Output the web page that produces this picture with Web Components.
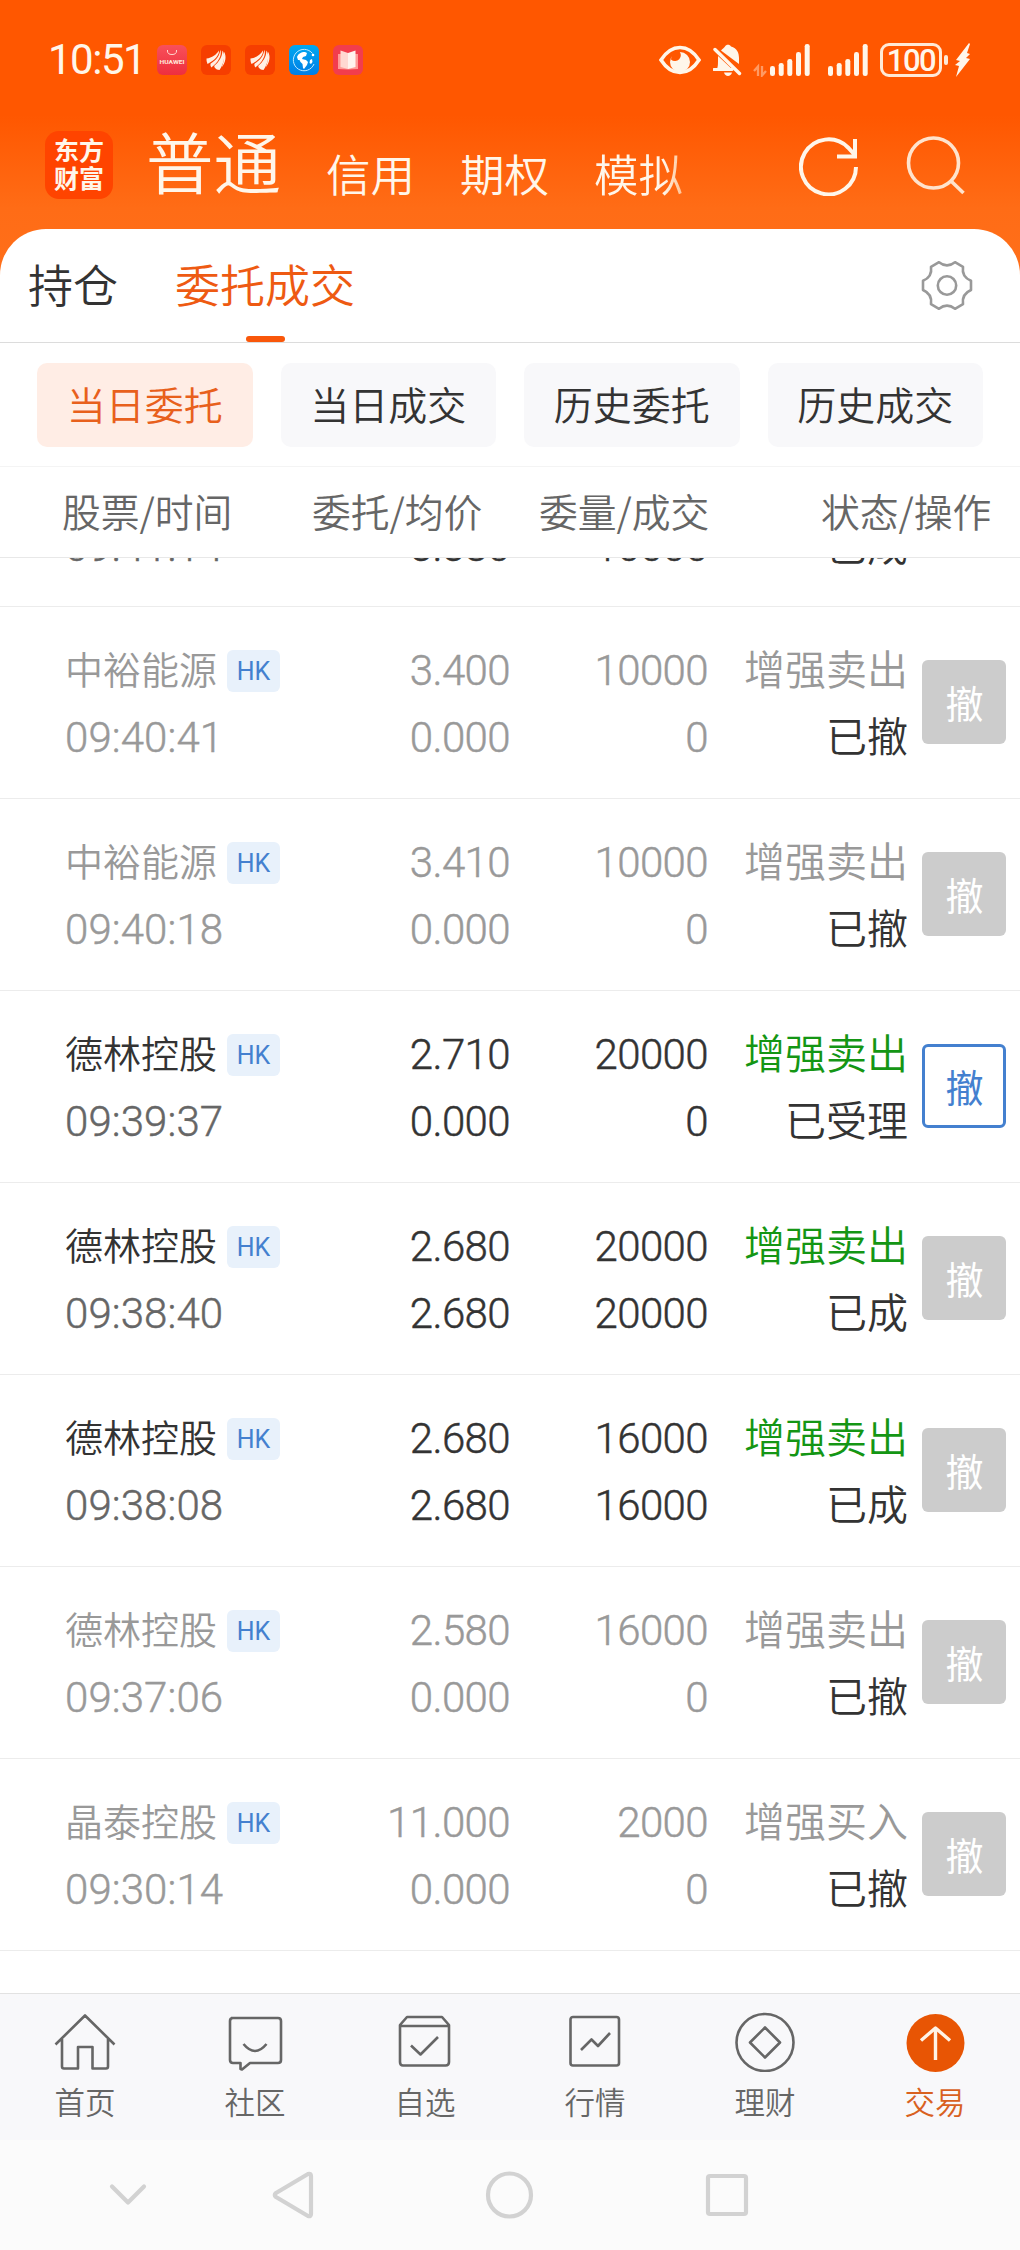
<!DOCTYPE html>
<html lang="zh-CN">
<head>
<meta charset="utf-8">
<title>委托成交</title>
<style>
html,body{margin:0;padding:0;width:1020px;height:2250px;overflow:hidden;background:#fff}
body{font-family:"Noto Sans CJK SC",sans-serif;color:#333}
</style>
</head>
<body>
<trade-app></trade-app>
<script>
const define=(name,css,html)=>customElements.define(name,class extends HTMLElement{
  constructor(){
    super();
    const root=this.attachShadow({mode:'open'});
    root.innerHTML='<style>*{box-sizing:border-box}'+css+'</style>'+(typeof html==='function'?html(this):html);
  }
});
const eagle='<svg width="30" height="30" viewBox="0 0 30 30"><rect width="30" height="30" rx="6" fill="#f63e00"/><g fill="#fff0e4"><path d="M5.500 13.500C11 13 15.500 9.500 18 5.500C18.500 10 13.500 15.500 6.500 19Q5.200 16 5.500 13.500Z"/><path d="M19.300 4.800C21.500 10 17 18 10.300 22.500Q9 20.500 9.500 18.800C15.500 15 18.800 10.500 19.300 4.800Z"/><path d="M21.300 5.500C25.500 11 22 20 18.500 25Q15.500 25 14 23Q13 21.500 13.300 20.800C18 17 21.500 11.500 21.300 5.500Z"/><path d="M22.800 6.500C26 11 24.500 18 20.500 22.500C23 17 23.500 12 22.800 6.500Z"/></g></svg>';
const bars=()=>`<svg width="40" height="34" viewBox="0 0 40 34" fill="#fff6ea"><rect x="0" y="23" width="5" height="10" rx="2.300"/><rect x="8.700" y="20" width="5" height="13" rx="2.300"/><rect x="17.300" y="16" width="5" height="17" rx="2.300"/><rect x="26" y="9" width="5" height="24" rx="2.300"/><rect x="34.700" y="1" width="5" height="32" rx="2.300"/></svg>`;

define('status-bar',`
:host{display:flex;align-items:center;height:120px;padding:0 49px 0 48px;color:#fff6ea}
svg{display:block;flex:none}
time{font:400 42px/46px Roboto,sans-serif;letter-spacing:-1.500px;width:109px}
.apps{display:flex;gap:14px;flex:1}
.sys{display:flex;align-items:center}
.bat{width:62px;height:34px;border:3px solid #ffe9d6;border-radius:9px;margin-left:12px;font:500 31px/29px Roboto,sans-serif;text-align:center;letter-spacing:-1.500px}
.nub{width:4px;height:10px;border-radius:2px;background:#ffe9d6;margin:0 7px 0 2px}`,
`<time>10:51</time><div class="apps">
<svg width="30" height="30" viewBox="0 0 30 30"><defs><linearGradient id="h" x2="0" y2="1"><stop stop-color="#f8505a"/><stop offset="1" stop-color="#ee2f3f"/></linearGradient></defs><rect width="30" height="30" rx="6" fill="url(#h)"/><path d="M10.500 5v1a4.500 3.500 0 0 0 9 0V5" fill="none" stroke="#ffd9cf" stroke-width="1"/><text x="15" y="19.300" text-anchor="middle" textLength="25" lengthAdjust="spacingAndGlyphs" font-family="Roboto" font-weight="700" font-size="5.600" fill="#ffe9dc">HUAWEI</text></svg>
${eagle}${eagle}
<svg width="30" height="30" viewBox="0 0 30 30"><defs><linearGradient id="b" x2="0" y2="1"><stop stop-color="#00a8f0"/><stop offset="1" stop-color="#007ee6"/></linearGradient></defs><rect width="30" height="30" rx="6" fill="url(#b)"/><path d="M23.500 8.500A10.700 10.700 0 1 0 25 19" fill="none" stroke="#bfeaff" stroke-width="1"/><path d="M8 12c1-3 4-5 8-5l2 1-1 3-3 1 -1 2 4 1 2 2-1 3-3 4-1-1-.5-4-2-2-1-2-1.500 0Z" fill="#fff"/><path d="M21 15l2-1 .5 3-1.500 2-1.500-1Z" fill="#fff"/><circle cx="24" cy="10" r="1.300" fill="#fff"/></svg>
<svg width="30" height="30" viewBox="0 0 30 30"><rect width="30" height="30" rx="6" fill="#f23d4d"/><path d="M5 9h20v15l-10 .5L5 24Z" fill="#ff9a96"/><path d="M7.500 5.500L15 8v16L7.500 22Z" fill="#ffd8d2"/><path d="M22.500 5.500L15 8v16l7.500-2Z" fill="#fff3ef"/></svg>
</div><div class="sys">
<svg width="42" height="30" viewBox="0 0 42 30"><path d="M2 15Q10 2.500 21 2.500T40 15Q32 27.500 21 27.500T2 15Z" fill="none" stroke="#fff6ea" stroke-width="3.600"/><circle cx="21" cy="17" r="10" fill="#fff6ea"/><path d="M20 6a5.600 5.600 0 1 1-8 8.500L13 7Z" fill="#ff5700"/></svg>
<svg style="margin-left:12px" width="29" height="34" viewBox="0 0 29 34"><path d="M3.500 27C5 24 5 22 5 17V13L20 27Z M8 7.500C9.500 5.500 11.500 4.500 12 3.500C13 1 17 1 18 3.500C24 5 26 10 26 15V21Z M11 29.500h8c-1 4.500-7 4.500-8 0Z" fill="#fff6ea"/><path d="M2 6.500L26.500 30.500" stroke="#fff6ea" stroke-width="3.400" stroke-linecap="round"/><path d="M1 26.500h18" stroke="#fff6ea" stroke-width="3" stroke-linecap="round"/></svg>
<svg style="margin:0 3px 0 11px" width="14" height="34" viewBox="0 0 14 34" fill="none" stroke="#ff9a63" stroke-width="2.300"><path d="M5 33V23.500L1 28M9 23v9.500L13 28"/></svg>
${bars()}<span style="width:18px"></span>${bars()}
<span class="bat">100</span><i class="nub"></i>
<svg width="16" height="34" viewBox="0 0 16 34"><path d="M14 0L1 17l4 1L0 22l4 1L1 34L15 16l-4-1 4-4-3-1L15 1Z" fill="#fff6ea"/></svg></div>`);

define('brand-header',`
:host{display:flex;align-items:flex-start;height:109px;padding:11px 54px 0 45px;color:#fff6ea}
.logo{width:68px;height:68px;border-radius:14px;background:#ff4400;font-weight:700;font-size:25px;line-height:28px;padding:4px 8px;text-align:center;flex:none}
nav{display:flex;align-items:flex-start;gap:45px;padding-left:33px;flex:1;white-space:nowrap}
b{font-weight:350;font-size:67.500px;line-height:68px;margin-top:-5px}
span{font-size:44.500px;font-weight:350;line-height:46px;margin-top:19px}
.fade{background:linear-gradient(90deg,#fff6ea 78%,#ffc090 100%);-webkit-background-clip:text;color:transparent}
svg{display:block;margin-top:5px;flex:none}`,
`<div class="logo">东方<br>财富</div><nav><b>普通</b><span>信用</span><span>期权</span><span class="fade">模拟</span></nav>
<svg width="60" height="60" viewBox="0 0 60 60" fill="none" stroke="#fff6ea" stroke-width="4"><path d="M57 31A27.500 27.500 0 1 1 49 11.500L55 18M56 3v17.500H38"/></svg>
<svg style="margin-left:47px" width="60" height="60" viewBox="0 0 60 60" fill="none" stroke="#ffe3cc" stroke-width="3.600"><circle cx="27.500" cy="27" r="25"/><path d="M45 45L57.500 57"/></svg>`);

define('section-tabs',`
:host{display:flex;height:114px;padding:0 47px 0 28px;background:#fff;border-radius:46px 46px 0 0;border-bottom:1px solid #dcdcdc;justify-content:space-between}
div{display:flex;gap:57px}
span{display:flex;flex-direction:column;align-items:center;justify-content:space-between;font-size:45px;font-weight:350;line-height:48px;padding-top:31px}
i{width:39px;height:6px;border-radius:3px;background:#f9570a}
.on{color:#ee5a12}
svg{display:block;margin-top:31px}`,
`<div><span>持仓</span><span class="on">委托成交<i></i></span></div>
<svg width="52" height="52" viewBox="0 0 52 52" fill="none" stroke="#999" stroke-width="2.600" stroke-linejoin="round"><circle cx="26" cy="25.500" r="9.200"/><path d="M18 2.200Q26 8.500 34 2.200L42 6.800Q40.500 17 50 20.800V30Q40.500 34 42 44.200L34 48.800Q26 42.500 18 48.800L10 44.200Q11.500 34 2 30V20.800Q11.500 17 10 6.800Z"/></svg>`);

define('filter-chips',`
:host{display:flex;gap:28px;height:124px;padding:20px 37px 0;border-bottom:1px solid #f4f4f4;background:#fff}
span{flex:1;height:84px;border-radius:10px;background:#f8f8fa;font-size:39px;font-weight:350;line-height:80px;text-align:center}
.on{background:#ffede5;color:#e8601c}`,
`<span class="on">当日委托</span><span>当日成交</span><span>历史委托</span><span>历史成交</span>`);

define('column-heads',`
:host{display:grid;grid-template-columns:250px 227px 282px auto;justify-content:start;height:91px;padding:21px 0 0 62px;border-bottom:1px solid #e8e8e8;background:#fff;color:#666;font-size:38.800px;font-weight:350;line-height:44px;white-space:nowrap}`,
`<span>股票/时间</span><span>委托/均价</span><span>委量/成交</span><span>状态/操作</span>`);

define('order-row',`
:host{display:grid;grid-template-columns:235px 210px 198px 200px 84px;height:192px;padding:30px 0 0 65px;border-bottom:1px solid #ececec;color:#333;font-size:38px;font-weight:350;line-height:67px;white-space:nowrap}
:host([dim]){color:#999}
.name{display:flex;align-items:center;height:67px}
.name span{line-height:63px;margin-top:-6px}
em{font:400 25px/43px Roboto,sans-serif;width:53px;height:42px;background:#e8f1fb;color:#4480cf;border-radius:6px;text-align:center;margin-left:10px}
.n{font-family:Roboto,sans-serif;font-size:42px;font-weight:300;letter-spacing:-.6px;-webkit-text-stroke:.45px currentColor}
.r{text-align:right}
.t{color:#666;letter-spacing:.1px}:host([dim]) .t{color:#999}
.s{font-size:41px;margin-top:-3px}
.s p:first-child{color:#149614}
:host([dim]) .s p:first-child{color:#999}
.s p:last-child{color:#333}
p{margin:0;height:67px}
button{all:unset;box-sizing:border-box;width:84px;height:84px;border-radius:6px;background:#ccc;color:#fff;font-size:38px;font-weight:400;line-height:74px;text-align:center;padding-left:1px;margin:23px 0 0 14px}
:host([open]) button{background:#fff;border:3px solid #4480cf;color:#4480cf;line-height:68px}
:host([tail]){grid-template-rows:67px;align-content:start;height:49px;padding:0 0 0 65px}
:host([tail]) .n{margin-top:-45px}
:host([tail]) .s{margin-top:-48px}
:host([tail]) .s p{color:#333}`,
el=>{const [name,time,price,avg,qty,done,side,state]=el.dataset.v.split('|');
if(el.hasAttribute('tail'))return `<p class="n t">${time}</p><p class="n r">${avg}</p><p class="n r">${done}</p><div class="s r"><p>${state}</p></div>`;
return `
<div><div class="name"><span>${name}</span><em>HK</em></div><p class="n t">${time}</p></div>
<div class="n r"><p>${price}</p><p>${avg}</p></div>
<div class="n r"><p>${qty}</p><p>${done}</p></div>
<div class="s r"><p>${side}</p><p>${state}</p></div><button>撤</button>`});

define('order-list',`:host{display:block;height:1435px;overflow:hidden;background:#fff}`,
[['tail','|09:41:14||3.380||10000||已成'],
['dim','中裕能源|09:40:41|3.400|0.000|10000|0|增强卖出|已撤'],
['dim','中裕能源|09:40:18|3.410|0.000|10000|0|增强卖出|已撤'],
['open','德林控股|09:39:37|2.710|0.000|20000|0|增强卖出|已受理'],
['','德林控股|09:38:40|2.680|2.680|20000|20000|增强卖出|已成'],
['','德林控股|09:38:08|2.680|2.680|16000|16000|增强卖出|已成'],
['dim','德林控股|09:37:06|2.580|0.000|16000|0|增强卖出|已撤'],
['dim','晶泰控股|09:30:14|11.000|0.000|2000|0|增强买入|已撤']
].map(([a,v])=>`<order-row ${a} data-v="${v}"></order-row>`).join(''));

define('app-nav',`
:host{display:flex;height:147px;background:#f8f8fa;border-top:1px solid #e2e2e2;color:#666}
div{flex:1;display:flex;flex-direction:column;align-items:center;font-size:30.500px;font-weight:350;line-height:36px;padding-top:18px}
svg{display:block;margin-bottom:11px}
.on{color:#d9611f}`,
[['首页','<path d="M2.500 32.500L32 3.500L61.500 32.500M9 27V54.500Q9 56.500 11 56.500H25V35H39.500V56.500H53Q55 56.500 55 54.500V27"/>'],
['社区','<path d="M8 6H55Q58 6 58 9V48Q58 51 55 51H27L19 57.500L17.500 57V51H10Q7 51 7 48V9Q7 6 10 6M20.500 32Q32 46 43.500 32"/>'],
['自选','<path d="M7 13L14 5H49L56 13V50Q56 53.500 52.500 53.500H10Q7 53.500 7 50ZM7 14H56M18 33.500L27.500 42.500L45 25"/>'],
['行情','<rect x="7.500" y="5" width="48.500" height="48.500" rx="2.500"/><path d="M18 38L28.500 27.500L35 34L47 21"/>'],
['理财','<circle cx="32" cy="30.500" r="28.500"/><path d="M32 15.500L47 30.500L32 45.500L17 30.500Z"/>'],
['交易','<circle cx="32.500" cy="31" r="29" fill="#e85504" stroke="none"/><path d="M32.500 48V17M18 28.500L32.500 16L47 28.500" stroke="#fff3e6" stroke-width="3.400"/>','on']
].map(([t,p,c])=>`<div class="${c||''}"><svg width="64" height="60" viewBox="0 0 64 60" fill="none" stroke="#666" stroke-width="2.600" stroke-linejoin="round">${p}</svg>${t}</div>`).join(''));

define('system-nav',`
:host{display:flex;align-items:center;height:110px;background:#fbfbfb}
svg{display:block}`,
`<svg width="1020" height="110" viewBox="0 0 1020 110" fill="none" stroke="#d2d2d2" stroke-width="4.200" stroke-linecap="round" stroke-linejoin="round"><path d="M112 46.500L128 62.500L144 46.500"/><path d="M308 34L276 53Q273.500 55 276 57L308 76Q311 77 311 74V36Q311 33 308 34Z"/><circle cx="509.500" cy="55" r="21.500"/><rect x="708" y="36" width="38" height="38" rx="2"/></svg>`);

define('trade-app',`:host{display:block;width:1020px;height:2250px;background:#fff}
header{height:275px;margin-bottom:-46px;background:linear-gradient(#ff5700 0,#ff5700 115px,#ff6c16 208px,#ff6f1a 100%)}`,
`<header><status-bar></status-bar><brand-header></brand-header></header>
<section-tabs></section-tabs><filter-chips></filter-chips><column-heads></column-heads><order-list></order-list><app-nav></app-nav><system-nav></system-nav>`);
</script>
</body>
</html>
